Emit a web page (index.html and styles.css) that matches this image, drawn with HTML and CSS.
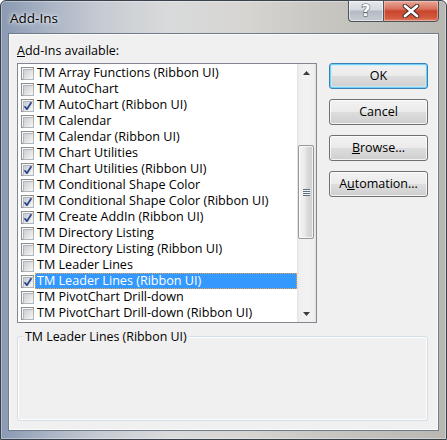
FILE: index.html
```html
<!DOCTYPE html>
<html>
<head>
<meta charset="utf-8">
<link rel="stylesheet" href="styles.css">
</head>
<body>
<div class="window">
  <div class="titlebar">
    <span class="title">Add-Ins</span>
    <div class="caption-buttons">
      <div class="cbtn help"><span class="qmark">?</span></div>
      <div class="cbtn close">
        <svg width="20" height="14" viewBox="0 0 20 14">
          <path d="M4 2 L16 12 M16 2 L4 12" stroke="#3a2a28" stroke-width="4.6" stroke-linecap="round" fill="none"/>
          <path d="M4 2 L16 12 M16 2 L4 12" stroke="#ffffff" stroke-width="2.8" stroke-linecap="round" fill="none"/>
        </svg>
      </div>
    </div>
  </div>
  <div class="client">
    <div class="main">
      <div class="label"><u>A</u>dd-Ins available:</div>
      <div class="listbox">
        <div class="items">
          <div class="row"><span class="cb"></span><span class="txt">TM Array Functions (Ribbon UI)</span></div>
          <div class="row"><span class="cb"></span><span class="txt">TM AutoChart</span></div>
          <div class="row"><span class="cb checked"></span><span class="txt">TM AutoChart (Ribbon UI)</span></div>
          <div class="row"><span class="cb"></span><span class="txt">TM Calendar</span></div>
          <div class="row"><span class="cb"></span><span class="txt">TM Calendar (Ribbon UI)</span></div>
          <div class="row"><span class="cb"></span><span class="txt">TM Chart Utilities</span></div>
          <div class="row"><span class="cb checked"></span><span class="txt">TM Chart Utilities (Ribbon UI)</span></div>
          <div class="row"><span class="cb"></span><span class="txt">TM Conditional Shape Color</span></div>
          <div class="row"><span class="cb checked"></span><span class="txt">TM Conditional Shape Color (Ribbon UI)</span></div>
          <div class="row"><span class="cb checked"></span><span class="txt">TM Create AddIn (Ribbon UI)</span></div>
          <div class="row"><span class="cb"></span><span class="txt">TM Directory Listing</span></div>
          <div class="row"><span class="cb"></span><span class="txt">TM Directory Listing (Ribbon UI)</span></div>
          <div class="row"><span class="cb"></span><span class="txt">TM Leader Lines</span></div>
          <div class="row"><span class="cb checked"></span><span class="txt selected">TM Leader Lines (Ribbon UI)</span></div>
          <div class="row"><span class="cb"></span><span class="txt">TM PivotChart Drill-down</span></div>
          <div class="row"><span class="cb"></span><span class="txt">TM PivotChart Drill-down (Ribbon UI)</span></div>
        </div>
        <div class="scrollbar">
          <div class="arrow"><svg width="7" height="4" viewBox="0 0 7 4"><path d="M0 4 L3.5 0 L7 4 Z" fill="#3c3c3c"/></svg></div>
          <div class="track">
            <div class="thumb"><span class="grip"></span></div>
          </div>
          <div class="arrow"><svg width="7" height="4" viewBox="0 0 7 4"><path d="M0 0 L3.5 4 L7 0 Z" fill="#3c3c3c"/></svg></div>
        </div>
      </div>
      <div class="buttons">
        <div class="btn default">OK</div>
        <div class="btn">Cancel</div>
        <div class="btn"><u>B</u>rowse...</div>
        <div class="btn">A<u>u</u>tomation...</div>
      </div>
    </div>
    <div class="group">
      <span class="group-title">TM Leader Lines (Ribbon UI)</span>
    </div>
  </div>
</div>
</body>
</html>
```

FILE: styles.css
```css
* { box-sizing: border-box; }
html, body { margin: 0; padding: 0; }
body {
  width: 447px;
  height: 440px;
  overflow: hidden;
  font-family: "Open Sans", "Noto Sans", sans-serif;
  font-size: 12.5px;
  color: #000;
}
.window {
  width: 447px;
  height: 440px;
  border: 1px solid #39414d;
  border-radius: 6px 6px 0 0;
  background: linear-gradient(to right, #8a99b2 0%, #a7b2c3 10%, #c6cbd2 22%, #d9dadb 38%, #d6d5d2 55%, #c8c6c1 72%, #b9b7b2 100%);
  box-shadow: inset 0 0 0 1px rgba(255,255,255,0.35);
  display: flex;
  flex-direction: column;
}
.titlebar {
  height: 32px;
  display: flex;
  justify-content: space-between;
  align-items: flex-start;
}
.title {
  font-size: 13.5px;
  line-height: 16px;
  margin: 9px 0 0 9px;
  text-shadow: 0 0 6px #fff, 0 0 3px #fff;
}
.caption-buttons {
  display: flex;
  margin-right: 7px;
  margin-top: -1px;
}
.cbtn {
  height: 22px;
  border: 1px solid #4e535b;
  display: flex;
  align-items: center;
  justify-content: center;
}
.help {
  width: 35px;
  border-right: none;
  border-radius: 0 0 0 4px;
  background: linear-gradient(#e6e9ee 0%, #d4d9e0 45%, #b4bac4 50%, #c7ccd3 100%);
  box-shadow: inset 0 0 0 1px rgba(255,255,255,0.5);
}
.qmark {
  font-family: "DejaVu Sans", sans-serif;
  font-weight: bold;
  font-size: 16px;
  line-height: 16px;
  color: #fff;
  -webkit-text-stroke: 1px #4a4f58;
  paint-order: stroke fill;
}
.close {
  width: 56px;
  border-radius: 0 0 4px 0;
  background: linear-gradient(#e9a89a 0%, #d8705c 40%, #c7452e 50%, #d45a3e 85%, #e0866a 100%);
  box-shadow: inset 0 0 0 1px rgba(255,220,210,0.45);
}
.client {
  flex: 1;
  margin: 0 7px 8px 7px;
  border: 1px solid #6f7b8b;
  background: #f0f0f0;
  box-shadow: inset 0 0 0 1px #fbfbfb;
  padding: 9px 9px 0 8px;
  display: flex;
  flex-direction: column;
}
.main {
  display: grid;
  grid-template-columns: 300px 99px;
  grid-template-rows: 20px 260px;
  column-gap: 12px;
}
.label {
  grid-column: 1 / 3;
  line-height: 15px;
}
.listbox {
  border: 1px solid #828790;
  background: #fff;
  display: flex;
  height: 260px;
}
.items {
  flex: 1;
  padding-top: 1px;
  font-size: 12.6px;
}
.row {
  height: 16px;
  display: flex;
  align-items: center;
}
.cb {
  width: 13px;
  height: 13px;
  margin-left: 3px;
  border: 1px solid #8f8f8f;
  background: #f7f7f7;
  padding: 1px;
  position: relative;
  flex: none;
}
.cb::before {
  content: "";
  display: block;
  width: 9px;
  height: 9px;
  border: 1px solid #b1b6bd;
  background: linear-gradient(135deg, #c9cdd3 0%, #e2e4e7 55%, #f8f8f8 100%);
}
.cb.checked::after {
  content: "";
  position: absolute;
  left: 1px;
  top: 1px;
  width: 10px;
  height: 10px;
  background: url("data:image/svg+xml;utf8,<svg xmlns='http://www.w3.org/2000/svg' width='10' height='10' viewBox='0 0 10 10'><path d='M1.6 5.2 L3.9 8.2 L8.4 1.2' stroke='%232d3f86' stroke-width='1.7' fill='none' stroke-linejoin='round'/></svg>") no-repeat;
}
.txt {
  flex: 1;
  height: 16px;
  line-height: 16px;
  margin-left: 1px;
  padding-left: 2px;
  white-space: nowrap;
}
.txt.selected {
  background: #3399ff;
  color: #fff;
  outline: 1px dotted #e9a34f;
  outline-offset: -1px;
}
.scrollbar {
  width: 19px;
  flex: none;
  display: flex;
  flex-direction: column;
  background: linear-gradient(to right, #e2e2e2 0%, #efefef 12%, #f2f2f2 50%, #efefef 88%, #e2e2e2 100%);
}
.arrow {
  height: 17px;
  display: flex;
  align-items: center;
  justify-content: center;
}
.track {
  flex: 1;
}
.thumb {
  margin: 64px 2px 0 1px;
  height: 94px;
  border: 1px solid #979797;
  border-radius: 2px;
  background: linear-gradient(to right, #f4f4f4 0%, #e9e9e9 45%, #dcdcdc 55%, #cfcfcf 100%);
  box-shadow: inset 0 0 0 1px rgba(255,255,255,0.7);
  display: flex;
  align-items: center;
  justify-content: center;
}
.grip {
  width: 7px;
  height: 7px;
  background: repeating-linear-gradient(#5f6f80 0 1px, #f4f4f4 1px 2px);
}
.buttons {
  display: flex;
  flex-direction: column;
  gap: 10px;
}
.btn {
  height: 26px;
  border: 1px solid #707070;
  border-radius: 3px;
  background: linear-gradient(#f2f2f2 0%, #ebebeb 48%, #dddddd 52%, #cfcfcf 100%);
  box-shadow: inset 0 0 0 1px rgba(255,255,255,0.75);
  display: flex;
  align-items: center;
  justify-content: center;
  line-height: 16px;
}
.btn.default {
  border-color: #3c7fb1;
  box-shadow: inset 0 0 0 1px #71d2f7, inset 0 0 0 2px rgba(200,236,250,0.7);
}
.group {
  margin-top: 13px;
  width: 411px;
  height: 85px;
  border: 1px solid #d5dfe5;
  border-radius: 3px;
  box-shadow: inset 0 0 0 1px #fdfdfd;
}
.group-title {
  display: inline-block;
  margin: -8px 0 0 5px;
  padding: 0 2px;
  line-height: 15px;
  vertical-align: top;
  background: #f0f0f0;
  font-size: 12.4px;
}
```
